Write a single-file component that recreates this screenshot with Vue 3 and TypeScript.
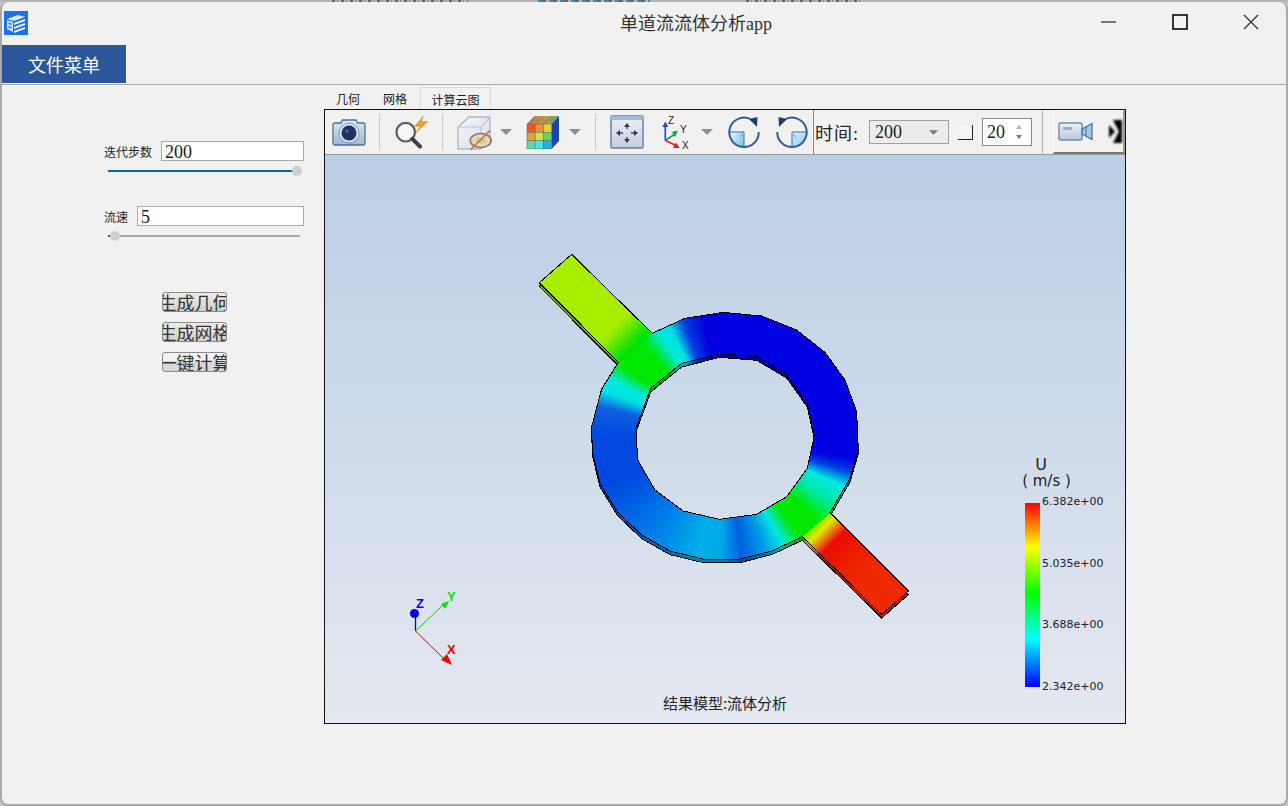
<template>
  <div class="screen">
    <div class="behind">
      <span class="smudge s1"></span>
      <span class="smudge s2"></span>
      <span class="smudge s3"></span>
    </div>
    <div class="window">
      <header class="titlebar">
        <svg class="app-icon" viewBox="0 0 24 24">
          <rect width="24" height="24" fill="#1a73e8" />
          <path d="M3 8 L14 4 L21 6 L10 10 Z" fill="#dfe9f8" />
          <path d="M3 9 L9 11 L9 21 L3 18 Z" fill="#cfe0f7" />
          <path d="M4.500 11.500 L7.500 12.500 V14 L4.500 13 Z M4.500 15 L7.500 16 V17.500 L4.500 16.500 Z" fill="#1a73e8" />
          <path d="M10 12 L21 8 V10 L10 14 Z M10 16 L21 12 V14 L10 18 Z M10 20 L21 16 V18 L10 22 Z" fill="#eef4fc" />
        </svg>
        <div class="title">单道流流体分析app</div>
        <svg class="win-btn min" viewBox="0 0 16 16"><path d="M0 8 H15" /></svg>
        <svg class="win-btn max" viewBox="0 0 16 16"><rect x="1" y="1" width="14" height="14" /></svg>
        <svg class="win-btn close" viewBox="0 0 16 16"><path d="M1 1 L15 15 M15 1 L1 15" /></svg>
      </header>

      <nav class="menubar">
        <div class="menu-item">文件菜单</div>
      </nav>

      <main class="content">
        <aside class="side">
          <div v-for="(p, i) in params" :key="p.label" class="param" :class="{ second: i === 1 }">
            <div class="param-row">
              <label>{{ p.label }}</label>
              <div class="text-input">{{ p.value }}</div>
            </div>
            <div class="slider">
              <div class="slider-fill" :style="{ width: p.pos + 'px' }"></div>
              <div class="slider-knob" :style="{ left: p.pos - 5 + 'px' }"></div>
            </div>
          </div>
          <div class="actions">
            <button class="act a1">生成几何</button>
            <button class="act a2">生成网格</button>
            <button class="act a3">一键计算</button>
          </div>
        </aside>

        <section class="viewer">
          <div class="tabs">
            <div class="tab t1">几何</div>
            <div class="tab t2">网格</div>
            <div class="tab active">计算云图</div>
          </div>
          <div class="frame">
            <div class="toolbar">
              <svg class="ic camera" viewBox="0 0 34 30">
                <defs>
                  <linearGradient id="camBody" x1="0" y1="0" x2="0" y2="1">
                    <stop offset="0" stop-color="#dfe8f3" />
                    <stop offset="1" stop-color="#9db8d8" />
                  </linearGradient>
                </defs>
                <path d="M3 6 H9 L10.500 3 H24 L25.500 6 H31 Q33 6 33 8 V26 Q33 28 31 28 H3 Q1 28 1 26 V8 Q1 6 3 6 Z" fill="url(#camBody)" stroke="#4f6f9c" stroke-width="1.300" />
                <circle cx="17" cy="16" r="10" fill="#d7e2f0" stroke="#7f9abc" />
                <circle cx="17" cy="16" r="7.500" fill="#1b3263" />
                <circle cx="15" cy="14" r="1.500" fill="#4f6d9e" />
              </svg>
              <span class="sep s-a"></span>
              <svg class="ic search" viewBox="0 0 36 34">
                <path d="M29.300 1.200 L20.700 11.200 H26.700 L20.700 18.800 L34 6.500 H27.300 Z" fill="#f0a030" stroke="#cf7c1c" stroke-width=".5" />
                <circle cx="11.700" cy="17.200" r="9.300" fill="#f6f7f9" stroke="#5a5f66" stroke-width="2.200" />
                <path d="M18.300 23.800 L26 31.500" stroke="#3c4046" stroke-width="4" stroke-linecap="round" />
              </svg>
              <span class="sep s-b"></span>
              <svg class="ic cube" viewBox="0 0 35 36">
                <defs>
                  <linearGradient id="cubeFace" x1="0" y1="0" x2="1" y2="1">
                    <stop offset="0" stop-color="#f4f6f9" />
                    <stop offset="1" stop-color="#d8dee6" />
                  </linearGradient>
                </defs>
                <path d="M1 13 L12 3 H33 V25 L24 35 H1 Z" fill="url(#cubeFace)" stroke="#aeb8c6" stroke-width="1.400" />
                <path d="M1 13 H24 L33 3 M24 13 V35" fill="none" stroke="#bcc4d0" stroke-width="1.200" />
                <ellipse cx="23.700" cy="26.500" rx="10.500" ry="7" fill="#ead9a0" stroke="#6f7c8e" stroke-width="1.600" />
                <ellipse cx="23.700" cy="26.500" rx="5" ry="3" fill="#c2c4c0" />
                <path d="M13.700 35.500 L33 16.500" stroke="#d86a30" stroke-width="1.500" />
              </svg>
              <svg class="ic arrow a-cube" viewBox="0 0 12 6"><path d="M0 0 H12 L6 6 Z" /></svg>
              <svg class="ic box" viewBox="0 0 33 33">
                <defs>
                  <linearGradient id="boxTop" x1="0" y1="0" x2="1" y2="0">
                    <stop offset="0" stop-color="#d8703c" />
                    <stop offset=".6" stop-color="#c0a050" />
                    <stop offset="1" stop-color="#58a878" />
                  </linearGradient>
                </defs>
                <path d="M25.500 8 L33 0 V25 L25.500 33 Z" fill="#1c46a8" />
                <path d="M1 8 L8.500 0 H33 L25.500 8 Z" fill="url(#boxTop)" />
                <path d="M9.200 0 L1.700 8 M17.300 0 L9.800 8 M25.500 0 L18 8 M5 4 H29" stroke="#6a6a5a" stroke-width=".5" />
                <rect v-for="c in cubeCells" :key="c.x + '-' + c.y" :x="c.x" :y="c.y" width="8.170" height="8.330" :fill="c.fill" stroke="#4f6a5c" stroke-width=".5" />
              </svg>
              <svg class="ic arrow a-box" viewBox="0 0 12 6"><path d="M0 0 H12 L6 6 Z" /></svg>
              <span class="sep s-c"></span>
              <svg class="ic view" viewBox="0 0 34 34">
                <defs>
                  <linearGradient id="viewBg" x1="0" y1="0" x2="0" y2="1">
                    <stop offset="0" stop-color="#eef0f5" />
                    <stop offset="1" stop-color="#c6cedb" />
                  </linearGradient>
                </defs>
                <rect x="1" y="1" width="32" height="32" rx="1" fill="url(#viewBg)" stroke="#5f7ca6" stroke-width="1.400" />
                <rect x="1" y="1" width="32" height="4" fill="#a4b8d6" />
                <path d="M17 11 V14 M17 22 V25 M9 18 H13 M21 18 H25" stroke="#27486f" stroke-width="1.300" />
                <path d="M17 8 L14 12 H20 Z M17 28 L14 24 H20 Z M6 18 L10 15 V21 Z M28 18 L24 15 V21 Z" fill="#1e4270" />
              </svg>
              <svg class="ic axes" viewBox="0 0 32 34">
                <path d="M4.300 25.500 V10" stroke="#2a4fb5" stroke-width="1.700" />
                <path d="M4.300 6.500 L1.300 12 H7.300 Z" fill="#2a4fb5" />
                <path d="M4.300 25.500 L14 19" stroke="#1f9a4a" stroke-width="1.700" />
                <path d="M17 15.500 L11 17 L14 22 Z" fill="#1f9a4a" />
                <path d="M4.300 25.500 L15 30.500" stroke="#e02020" stroke-width="1.700" />
                <path d="M18.700 33 L12 33 L15 27.500 Z" fill="#e02020" />
                <text x="7" y="8.500" class="axis-t">Z</text>
                <text x="19" y="18" class="axis-t">Y</text>
                <text x="21" y="34" class="axis-t">X</text>
              </svg>
              <svg class="ic arrow a-axes" viewBox="0 0 12 6"><path d="M0 0 H12 L6 6 Z" /></svg>
              <svg class="ic rot r1" viewBox="0 0 32 34">
                <defs>
                  <linearGradient id="rotFill" x1="0" y1="0" x2="1" y2="1">
                    <stop offset="0" stop-color="#e8f5fc" />
                    <stop offset="1" stop-color="#6cc4ec" />
                  </linearGradient>
                </defs>
                <path d="M1 17 H16 V32 A15 15 0 0 1 1 17 Z" fill="url(#rotFill)" />
                <path d="M1 17 H16 V32" fill="none" stroke="#2f6ea8" stroke-width="1" />
                <path d="M13 20 H16 M13 20 V23" fill="none" stroke="#6aa6d0" stroke-width="1" />
                <path d="M24 5 A14.700 14.700 0 1 0 30.700 17" fill="none" stroke="#2f5f8f" stroke-width="2" />
                <path d="M29.500 2 L21 4 L29 12 Z" fill="#1d3f6e" />
              </svg>
              <svg class="ic rot r2" viewBox="0 0 32 34">
                <path d="M31 17 H16 V32 A15 15 0 0 0 31 17 Z" fill="url(#rotFill)" />
                <path d="M31 17 H16 V32" fill="none" stroke="#2f6ea8" stroke-width="1" />
                <path d="M19 20 H16 M19 20 V23" fill="none" stroke="#6aa6d0" stroke-width="1" />
                <path d="M8 5 A14.700 14.700 0 1 1 1.300 17" fill="none" stroke="#2f5f8f" stroke-width="2" />
                <path d="M2.500 2 L11 4 L3 12 Z" fill="#1d3f6e" />
              </svg>
              <span class="sep-dark"></span>
              <span class="time-label">时间:</span>
              <div class="combo">
                <span>200</span>
                <svg viewBox="0 0 8 4"><path d="M0 0 H8 L4 4 Z" /></svg>
              </div>
              <span class="check"></span>
              <div class="spin">
                <span>20</span>
                <svg viewBox="0 0 8 18"><path d="M4 2 L7 6 H1 Z" fill="#b4b4b4" /><path d="M4 16 L7 12 H1 Z" fill="#777" /></svg>
              </div>
              <span class="sep s-d"></span>
              <div class="raised">
                <svg class="rec" viewBox="0 0 35 19">
                  <defs>
                    <linearGradient id="recBody" x1="0" y1="0" x2="0" y2="1">
                      <stop offset="0" stop-color="#eef2f7" />
                      <stop offset="1" stop-color="#b8c8dc" />
                    </linearGradient>
                  </defs>
                  <rect x="1" y="1" width="23" height="17" rx="1.500" fill="url(#recBody)" stroke="#6a8ab0" stroke-width="1.400" />
                  <rect x="5" y="5" width="9" height="3" fill="#a6adb6" />
                  <path d="M24 7 L34 1.500 V17.500 L24 12 Z" fill="#a8c8e0" stroke="#3f6f9f" stroke-width="1.200" />
                  <path d="M28 5 V14" stroke="#3f6f9f" />
                </svg>
                <svg class="clip-ic" viewBox="0 0 15 23">
                  <path d="M1 5 L7 11.500 L1 18 Z M5 0 H14 V23 H5 L11 11.500 Z" fill="#000" />
                </svg>
              </div>
            </div>

            <div class="canvas">
              <svg class="model" viewBox="0 0 1170 1140">
                <defs>
                  <clipPath id="ringClip">
                    <path :d="ringPath" clip-rule="evenodd" />
                  </clipPath>
                  <linearGradient id="barIn" gradientUnits="userSpaceOnUse" x1="225" y1="185" x2="325" y2="285">
                    <stop offset="0" stop-color="#a8ec00" />
                    <stop offset=".45" stop-color="#a8ec00" />
                    <stop offset="1" stop-color="#04e400" />
                  </linearGradient>
                  <linearGradient id="barOut" gradientUnits="userSpaceOnUse" x1="840" y1="820" x2="1000" y2="980">
                    <stop offset="0" stop-color="#00e800" />
                    <stop offset=".22" stop-color="#e8e800" />
                    <stop offset=".44" stop-color="#ea0c00" />
                    <stop offset=".7" stop-color="#ec1c00" />
                    <stop offset="1" stop-color="#ee2800" />
                  </linearGradient>
                </defs>
                <g v-for="layer in layers" :key="layer.cls" :class="layer.cls" :transform="`translate(0 ${layer.dy})`">
                  <polygon :points="barInPts" fill="url(#barIn)" />
                  <polygon :points="barOutPts" fill="url(#barOut)" />
                  <foreignObject x="0" y="0" width="1170" height="1140" clip-path="url(#ringClip)">
                    <div class="ring-fill"></div>
                  </foreignObject>
                  <path :d="outlinePath" class="outline" fill-rule="evenodd" />
                </g>
              </svg>

              <svg class="triad" viewBox="0 0 90 90">
                <path d="M25.500 51 V34" stroke="#0000e0" stroke-width="1.300" />
                <circle cx="24.500" cy="33.500" r="4.500" fill="#0000e8" />
                <text x="26" y="28" fill="#0000e8" class="triad-t">Z</text>
                <path d="M25.500 51 L52 26" stroke="#00e000" />
                <path d="M59 21 L51 24 L55 29 Z" fill="#00e000" />
                <text x="57" y="21" fill="#00e800" class="triad-t">Y</text>
                <path d="M25.500 51 L53 78" stroke="#d80000" />
                <path d="M62 85 L51 80 L57 74 Z" fill="#f00000" />
                <text x="57" y="74" fill="#f00000" class="triad-t">X</text>
              </svg>

              <div class="legend">
                <div class="legend-head">
                  <span class="legend-u">U</span>
                  <span class="legend-unit">( m/s )</span>
                </div>
                <div class="legend-body">
                  <div class="legend-bar"></div>
                  <div class="legend-ticks">
                    <span v-for="t in ticks" :key="t">{{ t }}</span>
                  </div>
                </div>
              </div>

              <div class="caption">结果模型:流体分析</div>
            </div>
          </div>
        </section>
      </main>
    </div>
  </div>
</template>

<script setup lang="ts">
// 左侧参数
const params = [
  { label: '迭代步数', value: '200', pos: 189 },
  { label: '流速', value: '5', pos: 7 },
]

const ticks = ['6.382e+00', '5.035e+00', '3.688e+00', '2.342e+00']

// 工具栏色块立方体
const cubeColors = [
  ['#e8582c', '#f09030', '#e8d030'],
  ['#e8a030', '#d8e040', '#60d860'],
  ['#60d8a0', '#50e0e0', '#30a8e8'],
]
const cubeCells = cubeColors.flatMap((row, r) =>
  row.map((fill, c) => ({ x: 1 + c * 8.17, y: 8 + r * 8.33, fill })),
)

// 模型轮廓，坐标取自截图放大 3 倍后的位置
const outer = '367,265 465,220 580,202 695,213 800,255 885,322 945,405 980,500 985,615 960,700 900,803'
const outerLow = '817,875 725,918 630,942 520,942 420,918 335,870 262,800 210,715 187,620 185,545 215,432 265,352'
const inner = '570,326 680,335 770,388 832,475 853,572 832,670 770,755 680,808 568,823 460,798 375,735 323,645 318,550 362,430 455,355'

const barInPts = '125,28 367,265 265,352 28,113'
const barOutPts = '900,803 1135,1038 1055,1108 817,875'

const toPath = (pts: string) => 'M' + pts.split(' ').join(' L') + ' Z'
const ringPath = `${toPath(outer + ' ' + outerLow)} ${toPath(inner)}`
const outlinePath = `${toPath(`${outer} 1135,1038 1055,1108 ${outerLow} 28,113 125,28`)} ${toPath(inner)}`

const layers = [
  { cls: 'wall', dy: 11 },
  { cls: 'face', dy: 0 },
]
</script>

<style>
html,
body {
  margin: 0;
  background: #fff;
}
</style>

<style scoped>
.screen {
  position: relative;
  width: 1288px;
  height: 806px;
  overflow: hidden;
  background: #c4c4c4;
  font-family: 'Liberation Serif', 'Noto Sans CJK SC', serif;
  color: #222;
}
.behind {
  position: absolute;
  inset: 0 0 auto 0;
  height: 2px;
  background: #b4b4b4;
}
.smudge {
  position: absolute;
  top: 0;
  height: 2px;
  background: repeating-linear-gradient(90deg, #666 0 3px, transparent 3px 5px, #888 5px 6px, transparent 6px 9px);
}
.s1 {
  left: 332px;
  width: 136px;
}
.s2 {
  left: 538px;
  width: 112px;
  background: repeating-linear-gradient(90deg, #4a80b8 0 4px, #666 4px 8px, transparent 8px 11px);
}
.s3 {
  left: 746px;
  width: 116px;
}
.window {
  position: relative;
  box-sizing: border-box;
  width: 1288px;
  height: 804px;
  margin-top: 2px;
  display: flex;
  flex-direction: column;
  background: #f1f1f1;
  border-left: 2px solid #a8a8a8;
  border-right: 2px solid #a8a8a8;
  border-bottom: 2px solid #a8a8a8;
  border-radius: 8px;
}
.titlebar {
  display: flex;
  align-items: center;
  height: 43px;
  flex: none;
}
.app-icon {
  width: 24px;
  height: 24px;
  margin-left: 2px;
  margin-top: -1px;
}
.title {
  margin-left: 592px;
  width: 152px;
  margin-top: -3px;
  font-size: 18px;
  white-space: nowrap;
  color: #333;
}
.win-btn {
  width: 16px;
  height: 16px;
  fill: none;
  stroke: #333;
  stroke-width: 1.300;
  margin-top: -3px;
}
.min {
  margin-left: 329px;
}
.max {
  margin-left: 55px;
  stroke-width: 2;
}
.close {
  margin-left: 55px;
}
.menubar {
  flex: none;
  height: 39px;
  border-bottom: 1px solid #a8a8a8;
}
.menu-item {
  box-sizing: border-box;
  width: 124px;
  height: 38px;
  line-height: 38px;
  padding-top: 2px;
  text-align: center;
  background: #2b579a;
  color: #fff;
  font-size: 18px;
}
.content {
  flex: 1;
  display: flex;
  min-height: 0;
}
.side {
  width: 322px;
  flex: none;
  box-sizing: border-box;
  padding: 56px 20px 0 102px;
  display: flex;
  flex-direction: column;
}
.param {
  display: flex;
  flex-direction: column;
}
.param.second {
  margin-top: 34px;
}
.param-row {
  display: flex;
  align-items: center;
  gap: 9px;
  height: 20px;
}
.param-row label {
  font-family: 'Noto Sans CJK SC', sans-serif;
  font-size: 12px;
  color: #222;
  flex: none;
}
.text-input {
  flex: 1;
  box-sizing: border-box;
  height: 20px;
  line-height: 20px;
  padding-left: 3px;
  background: #fff;
  border: 1px solid #aaa;
  font-size: 18px;
  color: #1a1a1a;
}
.slider {
  position: relative;
  margin: 9px 4px 0 4px;
  width: 192px;
  height: 2px;
  background: #aaa;
}
.slider-fill {
  height: 2px;
  background: #0f62b0;
}
.slider-knob {
  position: absolute;
  top: -4px;
  width: 10px;
  height: 10px;
  border-radius: 50%;
  background: #cfcfcf;
}
.actions {
  margin: 55px 0 0 58px;
  display: flex;
  flex-direction: column;
  gap: 10px;
  align-items: flex-start;
}
.act {
  box-sizing: border-box;
  width: 65px;
  height: 20px;
  padding: 0;
  overflow: hidden;
  white-space: nowrap;
  display: flex;
  justify-content: center;
  align-items: center;
  border: 1px solid #8a8a8a;
  border-radius: 3px;
  font-family: inherit;
  font-size: 18px;
  color: #333;
}
.a1,
.a2 {
  background: linear-gradient(#ececec, #cfcfcf);
}
.a3 {
  background: linear-gradient(#f2f2f2 0 45%, #d8d8d8 45% 100%);
}
.viewer {
  display: flex;
  flex-direction: column;
  width: 802px;
}
.tabs {
  display: flex;
  height: 24px;
  align-items: flex-end;
  box-sizing: border-box;
  font-family: 'Noto Sans CJK SC', sans-serif;
  font-size: 12px;
  color: #222;
}
.tab {
  height: 22px;
  line-height: 23px;
  flex: none;
}
.t1 {
  margin-left: 12px;
}
.t2 {
  margin-left: 23px;
}
.active {
  margin-left: 13px;
  width: 71px;
  box-sizing: border-box;
  text-align: center;
  background: #f2f2f2;
  border: 1px solid #d8d8d8;
  border-bottom: none;
}
.frame {
  box-sizing: border-box;
  width: 802px;
  height: 615px;
  border: 1px solid #111;
  display: flex;
  flex-direction: column;
}
.toolbar {
  flex: none;
  height: 45px;
  box-sizing: border-box;
  border-bottom: 1px solid #9a9a9a;
  display: flex;
  align-items: center;
  background: #f1f1f1;
}
.ic {
  flex: none;
  display: block;
}
.sep {
  flex: none;
  width: 1px;
  height: 36px;
  background: #c8c8c8;
}
.sep-dark {
  flex: none;
  width: 1px;
  height: 44px;
  background: #8a8a8a;
  margin-left: 5px;
}
.camera {
  width: 34px;
  height: 30px;
  margin-left: 7px;
}
.s-a {
  margin-left: 13px;
}
.search {
  width: 36px;
  height: 34px;
  margin-left: 14px;
}
.s-b {
  margin-left: 12px;
}
.cube {
  width: 35px;
  height: 36px;
  margin-left: 14px;
}
.arrow {
  width: 12px;
  height: 6px;
  fill: #8e8e8e;
}
.a-cube {
  margin-left: 8px;
}
.box {
  width: 33px;
  height: 33px;
  margin-left: 14px;
}
.a-box {
  margin-left: 10px;
}
.s-c {
  margin-left: 14px;
}
.view {
  width: 34px;
  height: 34px;
  margin-left: 14px;
}
.axes {
  width: 32px;
  height: 34px;
  margin-left: 17px;
}
.a-axes {
  margin-left: 8px;
}
.axis-t {
  font-family: 'Liberation Sans', sans-serif;
  font-size: 10px;
  fill: #222;
}
.rot {
  width: 32px;
  height: 34px;
}
.r1 {
  margin-left: 15px;
}
.r2 {
  margin-left: 16px;
}
.time-label {
  flex: none;
  margin-left: 1px;
  width: 46px;
  font-size: 18px;
  letter-spacing: 1px;
  white-space: nowrap;
}
.combo {
  flex: none;
  box-sizing: border-box;
  width: 80px;
  height: 24px;
  margin-left: 8px;
  padding: 0 10px 0 5px;
  border: 1px solid #a0a0a0;
  display: flex;
  align-items: center;
  justify-content: space-between;
  font-size: 18px;
  background: #ececec;
}
.combo svg {
  width: 9px;
  height: 5px;
  fill: #777;
}
.check {
  flex: none;
  box-sizing: border-box;
  width: 15px;
  height: 15px;
  margin-left: 9px;
  border-right: 1px solid #222;
  border-bottom: 1px solid #222;
  background: #f4f4f4;
}
.spin {
  flex: none;
  box-sizing: border-box;
  width: 50px;
  height: 28px;
  margin-left: 9px;
  padding: 0 8px 0 4px;
  border: 1px solid #8a8a8a;
  background: #fff;
  display: flex;
  align-items: center;
  justify-content: space-between;
  font-size: 18px;
}
.spin svg {
  width: 8px;
  height: 18px;
}
.s-d {
  margin-left: 10px;
  height: 44px;
  background: #b0b0b0;
}
.raised {
  flex: none;
  box-sizing: border-box;
  width: 72px;
  height: 44px;
  margin-left: 10px;
  padding-left: 4px;
  border-top: 1px solid #fbfbfb;
  border-left: 1px solid #fbfbfb;
  border-bottom: 2px solid #777;
  border-right: 2px solid #9a9a9a;
  display: flex;
  align-items: center;
  overflow: hidden;
}
.rec {
  width: 35px;
  height: 19px;
  flex: none;
}
.clip-ic {
  width: 15px;
  height: 23px;
  margin-left: 15px;
  flex: none;
  filter: blur(0.8px);
}
.canvas {
  position: relative;
  flex: 1;
  background: linear-gradient(#bacee5, #e4e8f0);
}
.model {
  position: absolute;
  left: 205px;
  top: 90px;
  width: 390px;
  height: 380px;
}
.ring-fill {
  width: 1170px;
  height: 1140px;
  background: conic-gradient(
    from 0deg at 585px 572px,
    #0000e0 0deg,
    #0000e0 100deg,
    #0040e0 106deg,
    #00e8e0 113deg,
    #00e8a0 122deg,
    #00e800 132deg,
    #00e800 143deg,
    #00e8e0 152deg,
    #00a0e8 160deg,
    #0060e0 172deg,
    #00a8e8 182deg,
    #00b0e8 192deg,
    #0080e8 215deg,
    #0048e0 247deg,
    #0048e0 270deg,
    #1060e0 283deg,
    #00e0e0 290deg,
    #00e8e0 296deg,
    #00e800 304deg,
    #00e800 318deg,
    #00e8e0 328deg,
    #00e0e0 333deg,
    #0040e0 340deg,
    #0000e0 350deg,
    #0000e0 360deg
  );
}
.wall {
  filter: brightness(0.75);
}
.outline {
  fill: none;
  stroke: #000;
  stroke-width: 3;
  stroke-linejoin: miter;
  shape-rendering: crispEdges;
}
.triad {
  position: absolute;
  left: 65px;
  top: 425px;
  width: 90px;
  height: 90px;
  fill: none;
}
.triad-t {
  font-family: 'Liberation Sans', sans-serif;
  font-size: 13px;
  font-weight: 700;
  stroke: none;
}
.legend {
  position: absolute;
  left: 695px;
  top: 301px;
  display: flex;
  flex-direction: column;
}
.legend-head {
  display: flex;
  flex-direction: column;
  align-items: center;
  width: 42px;
  font-family: 'DejaVu Sans', sans-serif;
  color: #222;
}
.legend-u {
  font-size: 16px;
  line-height: 17px;
}
.legend-unit {
  font-size: 15px;
  line-height: 17px;
  margin-left: 11px;
  white-space: pre;
}
.legend-body {
  display: flex;
  margin-top: 13px;
  margin-left: 5px;
}
.legend-bar {
  width: 15px;
  height: 184px;
  background: linear-gradient(#ff0000 0%, #ffff00 24%, #00ff00 49%, #00ffff 74%, #0000ff 100%);
}
.legend-ticks {
  height: 195px;
  margin-left: 2px;
  margin-top: -6px;
  display: flex;
  flex-direction: column;
  justify-content: space-between;
  font-family: 'DejaVu Sans', sans-serif;
  font-size: 11px;
  line-height: 10px;
  color: #222;
}
.caption {
  position: absolute;
  left: 0;
  right: 0;
  bottom: 11px;
  text-align: center;
  font-family: 'Noto Sans CJK SC', sans-serif;
  font-size: 15px;
  line-height: 18px;
  color: #222;
}
</style>
